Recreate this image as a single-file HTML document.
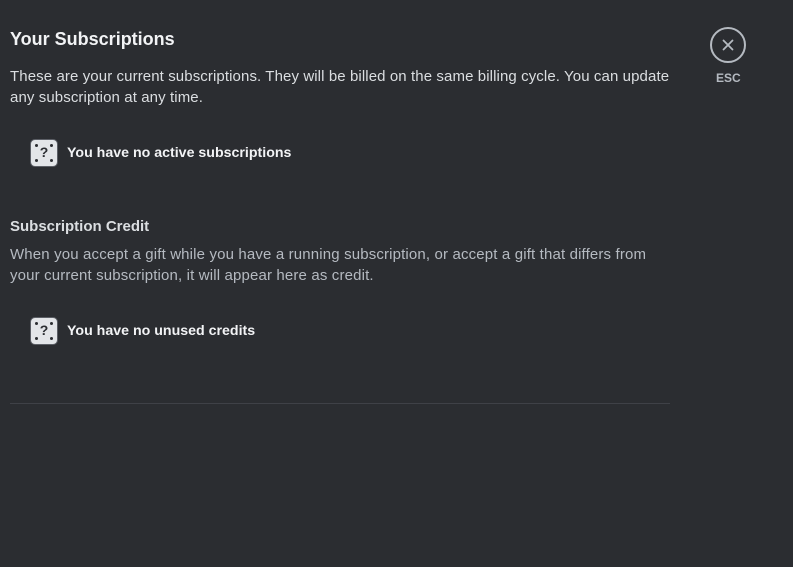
<!DOCTYPE html>
<html><head><style>
body{margin:0;width:793px;height:567px;background:#2b2d31;font-family:"Liberation Sans",sans-serif;position:relative;overflow:hidden}
.a{position:absolute;white-space:nowrap}
h1{position:absolute;left:10px;top:29px;margin:0;font-size:18px;font-weight:bold;color:#f2f3f5}
.p{position:absolute;left:10px;white-space:nowrap;font-size:15px;line-height:21px;color:#dbdee1;letter-spacing:0.1px}
.p2{color:#b5bac1;letter-spacing:0.15px}
.ic{position:absolute;left:30px;width:28px;height:28px;background:#e3e5e8;border:1.5px solid #5c5f66;border-radius:5px;box-sizing:border-box}
.ic b{position:absolute;width:3px;height:3px;background:#2b2d31;border-radius:50%}
.ic span{position:absolute;left:0;right:0;top:4px;text-align:center;font-weight:bold;font-size:14px;color:#2b2d31}
.t{position:absolute;left:67px;font-size:14.2px;font-weight:bold;color:#f2f3f5}
</style></head><body>
<h1>Your Subscriptions</h1>
<div class="p" style="top:66px">These are your current subscriptions. They will be billed on the same billing cycle. You can update<br>any subscription at any time.</div>
<div class="ic" style="top:139px"><b style="left:4px;top:4px"></b><b style="right:4px;top:4px"></b><b style="left:4px;bottom:4px"></b><b style="right:4px;bottom:4px"></b><span>?</span></div>
<div class="t" style="top:145px">You have no active subscriptions</div>
<div class="a" style="left:10px;top:218px;font-size:15px;font-weight:bold;color:#dbdee1">Subscription Credit</div>
<div class="p p2" style="top:244px">When you accept a gift while you have a running subscription, or accept a gift that differs from<br>your current subscription, it will appear here as credit.</div>
<div class="ic" style="top:317px"><b style="left:4px;top:4px"></b><b style="right:4px;top:4px"></b><b style="left:4px;bottom:4px"></b><b style="right:4px;bottom:4px"></b><span>?</span></div>
<div class="t" style="top:323px">You have no unused credits</div>
<div style="position:absolute;left:10px;top:403px;width:660px;height:1px;background:#3f4147"></div>
<svg style="position:absolute;left:710px;top:27px" width="36" height="36" viewBox="0 0 36 36"><circle cx="18" cy="18" r="17" fill="none" stroke="#b5bac1" stroke-width="2"/><path d="M13.5 13.5L22.5 22.5M22.5 13.5L13.5 22.5" stroke="#b5bac1" stroke-width="1.8" stroke-linecap="round"/></svg>
<div class="a" style="left:716px;top:71px;font-size:12px;font-weight:bold;color:#b5bac1">ESC</div>
</body></html>
